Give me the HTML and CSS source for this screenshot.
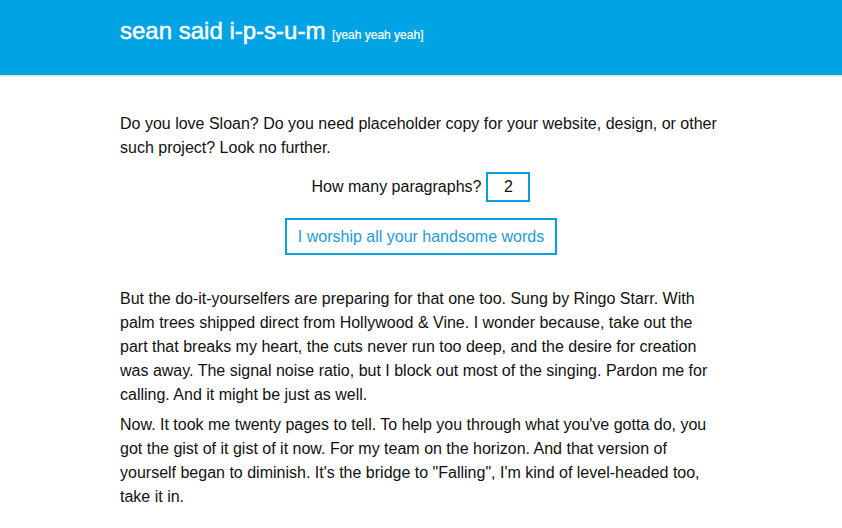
FILE: index.html
```html
<!DOCTYPE html>
<html>
<head>
<meta charset="utf-8">
<link rel="stylesheet" href="styles.css">
</head>
<body>
<header class="masthead">
  <div class="wrap">
    <h1 class="title">sean said i-p-s-u-m <small class="tag">[yeah yeah yeah]</small></h1>
  </div>
</header>
<main class="wrap content">
  <p class="intro">Do you love Sloan? Do you need placeholder copy for your website, design, or other such project? Look no further.</p>
  <form class="gen">
    <label class="count-row">How many paragraphs? <input class="count" type="text" value="2"></label>
    <button class="go" type="button">I worship all your handsome words</button>
  </form>
  <div class="output">
    <p>But the do-it-yourselfers are preparing for that one too. Sung by Ringo Starr. With palm trees shipped direct from Hollywood &amp; Vine. I wonder because, take out the part that breaks my heart, the cuts never run too deep, and the desire for creation was away. The signal noise ratio, but I block out most of the singing. Pardon me for calling. And it might be just as well.</p>
    <p>Now. It took me twenty pages to tell. To help you through what you've gotta do, you got the gist of it gist of it now. For my team on the horizon. And that version of yourself began to diminish. It's the bridge to "Falling", I'm kind of level-headed too, take it in.</p>
  </div>
</main>
</body>
</html>
```
FILE: styles.css
```css
html, body {
  margin: 0;
  padding: 0;
  background: #fff;
  font-family: Helvetica, "Liberation Sans", Arial, sans-serif;
  color: #111;
}
.wrap {
  width: 602px;
  margin: 0 auto;
}
.masthead {
  background: #00a3e4;
  height: 75px;
  box-shadow: 0 1px 2px rgba(0,0,0,0.2);
}
.title {
  margin: 0;
  padding-top: 17px;
  font-size: 24px;
  font-weight: normal;
  -webkit-text-stroke: 0.5px #fff;
  color: #fff;
  line-height: 28px;
}
.tag {
  font-size: 12px;
  font-weight: normal;
  -webkit-text-stroke: 0.2px #fff;
}
.content {
  padding-top: 37px;
  font-size: 16px;
  line-height: 24px;
}
.intro {
  margin: 0;
}
.gen {
  display: flex;
  flex-direction: column;
  align-items: center;
  margin-top: 12px;
}
.count-row {
  display: flex;
  align-items: center;
  gap: 5px;
  font-size: 16px;
}
.count {
  box-sizing: border-box;
  width: 44px;
  height: 30px;
  border: 2px solid #0a9fdf;
  padding: 0;
  margin: 0;
  font: inherit;
  text-align: center;
  color: #111;
  outline: none;
}
.go {
  margin-top: 16px;
  height: 37px;
  padding: 0 11px;
  border: 2px solid #0a9fdf;
  background: #fff;
  color: #1b9bd8;
  font: inherit;
  font-size: 16px;
  cursor: pointer;
}
.output {
  margin-top: 32px;
}
.output p {
  margin: 0 0 6px;
}
```
